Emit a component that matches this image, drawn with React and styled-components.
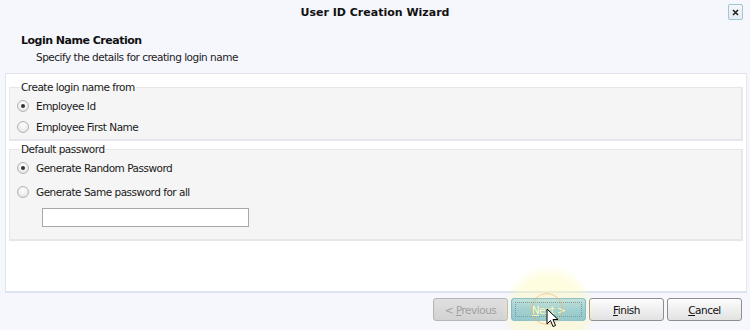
import React from "react";
import styled, { createGlobalStyle } from "styled-components";

const Global = createGlobalStyle`
  html, body { margin: 0; padding: 0; }
  body { background: #f6f6fd; font-family: "DejaVu Sans", sans-serif; }
`;

const Window = styled.div`
  position: relative;
  width: 750px;
  height: 330px;
  background: #f6f6fd;
  display: flex;
  flex-direction: column;
  overflow: hidden;
  font-family: "DejaVu Sans", sans-serif;
  font-size: 10.5px;
  letter-spacing: -0.5px;
  color: #1a1a1a;
`;

const TitleBar = styled.div`
  position: relative;
  height: 24px;
  display: flex;
  align-items: center;
  justify-content: center;
  font-weight: bold;
  font-size: 11px;
  letter-spacing: 0;
  color: #111;
`;

const CloseButton = styled.div`
  position: absolute;
  right: 7px;
  top: 4px;
  width: 13px;
  height: 14px;
  border: 1px solid #9cc7d3;
  border-radius: 2px;
  background: linear-gradient(#f4f7fb, #e6ecf2);
  display: flex;
  align-items: center;
  justify-content: center;
`;

const Header = styled.div`
  padding: 10px 0 0 21px;
  height: 39px;
  box-sizing: border-box;
`;

const Heading = styled.div`
  font-weight: bold;
  font-size: 11px;
  line-height: 14px;
  color: #111;
`;

const SubHeading = styled.div`
  margin-top: 2px;
  padding-left: 15px;
  line-height: 14px;
  color: #222;
`;

const Panel = styled.div`
  margin: 10px 3px 0 5px;
  height: 210px;
  background: #fff;
  border-top: 1px solid #e2e4ec;
  border-left: 1px solid #dfe5ee;
  border-right: 1px solid #e3e6f0;
  border-bottom: 2px solid #dbe4ef;
  padding: 7px 3px 0 3px;
  display: flex;
  flex-direction: column;
  gap: 2px;
`;

const Group = styled.fieldset`
  margin: 0;
  padding: 0 0 0 7px;
  border: 2px solid #e6e6ec;
  border-width: 1px 2px 2px 1px;
  background: #f5f5f5;
  height: ${(p) => p.$h}px;
  box-sizing: border-box;
  display: flex;
  flex-direction: column;
`;

const Legend = styled.legend`
  padding: 0 1px;
  margin-left: 3px;
  color: #1a1a1a;
  line-height: 13px;
`;

const RadioRow = styled.label`
  display: flex;
  align-items: center;
  gap: 7px;
  height: ${(p) => p.$h || 21}px;
  color: #1a1a1a;
`;

const Radio = styled.span`
  width: 10px;
  height: 10px;
  flex: none;
  border-radius: 50%;
  border: 1px solid #b5b5b5;
  background: radial-gradient(circle at 50% 35%, #ffffff 0%, #ececec 60%, #d8d8d8 100%);
  display: flex;
  align-items: center;
  justify-content: center;
  &::after {
    content: "";
    width: 4px;
    height: 4px;
    border-radius: 50%;
    background: ${(p) => (p.$checked ? "#333" : "transparent")};
  }
`;

const TextInput = styled.input`
  margin: 4px 0 0 25px;
  width: 207px;
  height: 19px;
  box-sizing: border-box;
  border: 1px solid #a8a8a8;
  background: #fff;
`;

const Footer = styled.div`
  display: flex;
  justify-content: flex-end;
  gap: 3px;
  padding: 5px 8px 0 0;
`;

const Button = styled.button`
  position: relative;
  width: 75px;
  height: 23px;
  box-sizing: border-box;
  border-radius: 3px;
  font-family: "DejaVu Sans", sans-serif;
  font-size: 10.5px;
  letter-spacing: -0.5px;
  padding: 0;
  border: 1px solid ${(p) => (p.$variant === "disabled" ? "#b5b5b5" : p.$variant === "hot" ? "#4f9fd6" : "#8e8e8e")};
  color: ${(p) => (p.$variant === "disabled" ? "#a0a0a0" : p.$variant === "hot" ? "#fff8c0" : "#111")};
  background: ${(p) =>
    p.$variant === "disabled"
      ? "linear-gradient(#e0e0e0, #d2d2d2)"
      : p.$variant === "hot"
      ? "linear-gradient(#a2d3f3, #6db7e6 50%, #58abe0)"
      : "linear-gradient(#fdfdfd, #efefef 50%, #e2e2e2)"};
  &::after {
    content: "";
    display: ${(p) => (p.$variant === "hot" ? "block" : "none")};
    position: absolute;
    inset: 3px;
    border: 1px dotted #2f6a93;
  }
`;

const Halo = styled.div`
  position: absolute;
  left: 503px;
  top: 266px;
  width: 92px;
  height: 92px;
  border-radius: 50%;
  background: radial-gradient(circle, rgba(255, 250, 170, 0.4) 0%, rgba(255, 250, 170, 0.35) 55%, rgba(255, 250, 170, 0) 72%);
  pointer-events: none;
`;

const Ring = styled.div`
  position: absolute;
  left: 531px;
  top: 293px;
  width: 32px;
  height: 32px;
  border-radius: 50%;
  border: 1px solid rgba(240, 170, 80, 0.55);
  box-sizing: border-box;
  pointer-events: none;
`;

const Cursor = styled.svg`
  position: absolute;
  left: 546px;
  top: 308px;
  pointer-events: none;
`;

export default function App() {
  return (
    <>
      <Global />
      <Window>
        <TitleBar>
          User ID Creation Wizard
          <CloseButton>
            <svg width="7" height="7" viewBox="0 0 7 7">
              <path d="M1 1 L6 6 M6 1 L1 6" stroke="#222" strokeWidth="1.6" />
            </svg>
          </CloseButton>
        </TitleBar>
        <Header>
          <Heading>Login Name Creation</Heading>
          <SubHeading>Specify the details for creating login name</SubHeading>
        </Header>
        <Panel>
          <Group $h={60}>
            <Legend>Create login name from</Legend>
            <RadioRow $h={23}>
              <Radio $checked />
              Employee Id
            </RadioRow>
            <RadioRow $h={20}>
              <Radio />
              Employee First Name
            </RadioRow>
          </Group>
          <Group $h={98}>
            <Legend>Default password</Legend>
            <RadioRow $h={23}>
              <Radio $checked />
              Generate Random Password
            </RadioRow>
            <RadioRow $h={25}>
              <Radio />
              Generate Same password for all
            </RadioRow>
            <TextInput />
          </Group>
        </Panel>
        <Footer>
          <Button $variant="disabled">
            &lt; <u>P</u>revious
          </Button>
          <Button $variant="hot">
            <u>N</u>ext &gt;
          </Button>
          <Button>
            <u>F</u>inish
          </Button>
          <Button>
            <u>C</u>ancel
          </Button>
        </Footer>
        <Halo />
        <Ring />
        <Cursor width="14" height="20" viewBox="0 0 14 20">
          <path d="M1 1 L1 16 L4.5 12.5 L7 18.5 L9.5 17.5 L7 11.5 L12 11.5 Z" fill="#fff" stroke="#000" strokeWidth="1" />
        </Cursor>
      </Window>
    </>
  );
}
